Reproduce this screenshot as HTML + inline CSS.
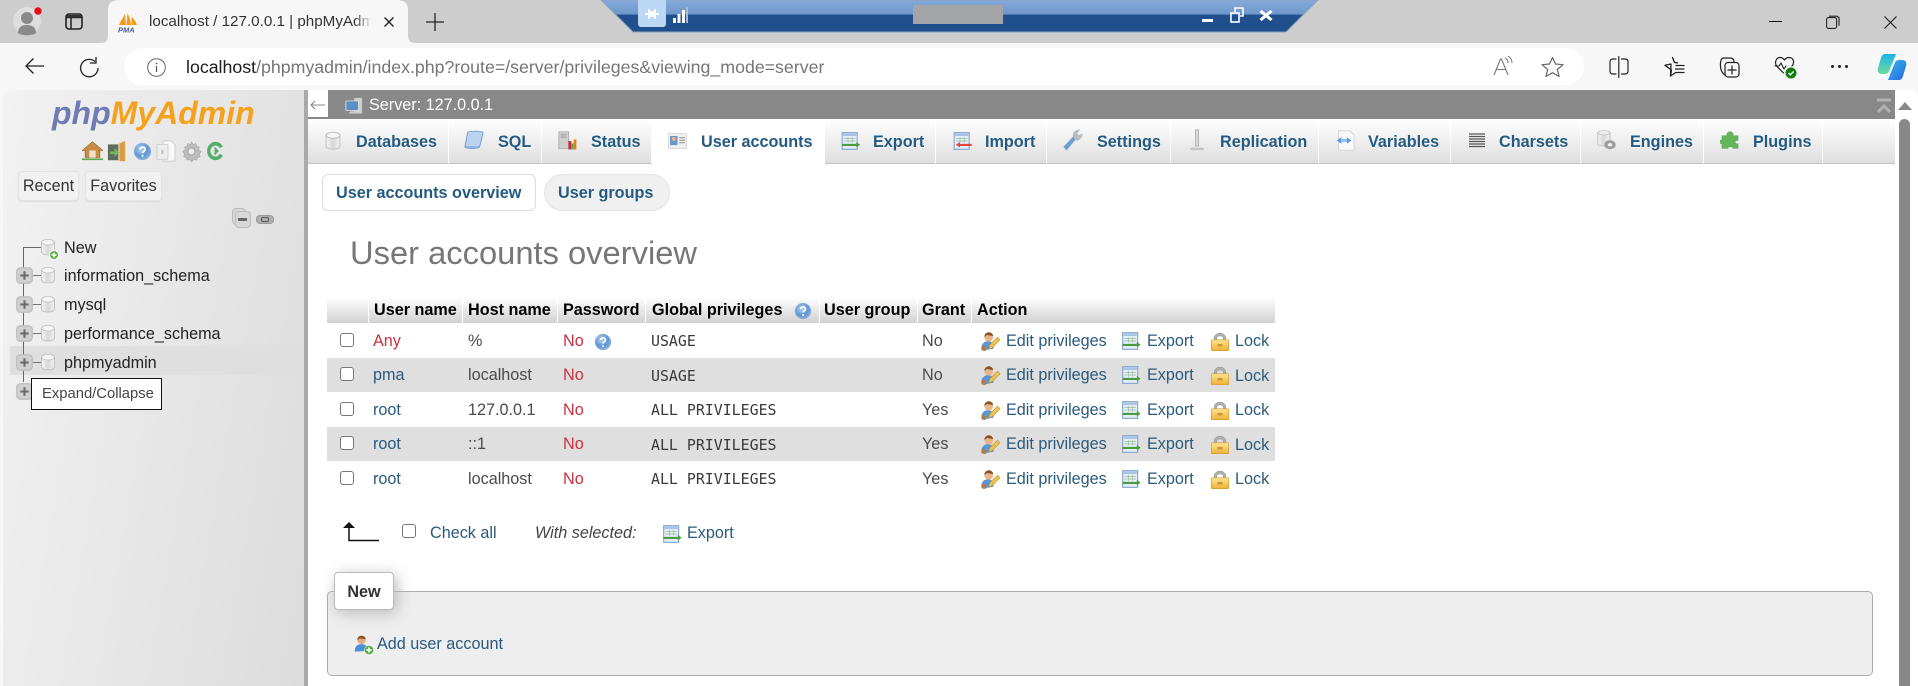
<!DOCTYPE html>
<html lang="en"><head><meta charset="utf-8"><title>localhost / 127.0.0.1 | phpMyAdmin</title>
<style>
html,body{margin:0;padding:0;width:1918px;height:686px;overflow:hidden;background:#f7f7f7;font-family:"Liberation Sans",Arial,sans-serif;color:#4a4a4a}
div,span,a,svg{position:absolute;display:block}
.t,.l,.b,.h,.m{white-space:nowrap;line-height:20px;font-size:16.2px;margin-top:1px}
.l{color:#2a5a7c}.h{font-weight:bold;color:#000}.b{font-weight:bold;color:#235a81;text-shadow:0 1px 0 #fff}
.m{font-family:"DejaVu Sans Mono","Liberation Mono",monospace;font-size:14.9px;color:#3a3a3a}
.r{color:#c8323f}
.row{left:0;width:1275px;height:35px}
.band{left:327px;width:948px;height:34px;background:#dfdfdf}
.cb{width:12px;height:12px;left:340px;border:1.5px solid #767676;border-radius:3px;background:#fff}
.tab{top:119px;height:44px;background:linear-gradient(#fff,#dfdfdf);border-right:1px solid #fff;border-bottom:1px solid #c4c4c4}
.hs{top:297px;width:1px;height:26px;background:#fff}
.st{fill:none;stroke:#222;stroke-width:1.5;stroke-linecap:round;stroke-linejoin:round}
</style></head><body>
<svg width="0" height="0" style="position:absolute">
<defs>
<linearGradient id="gdb" x1="0" x2="1" y1="0" y2="0"><stop offset="0" stop-color="#f4f4f4"/><stop offset=".5" stop-color="#d8d8d8"/><stop offset="1" stop-color="#f2f2f2"/></linearGradient>
<radialGradient id="ghp" cx=".4" cy=".35" r=".7"><stop offset="0" stop-color="#b9d4f0"/><stop offset=".6" stop-color="#5e96d3"/><stop offset="1" stop-color="#8db2da"/></radialGradient>
<linearGradient id="glk" x1="0" x2="0" y1="0" y2="1"><stop offset="0" stop-color="#ffe48c"/><stop offset="1" stop-color="#eeb23c"/></linearGradient>
<linearGradient id="gcp" x1="0" x2="1" y1="0" y2="1"><stop offset="0" stop-color="#2fb4e8"/><stop offset=".5" stop-color="#2f8fe8"/><stop offset="1" stop-color="#2a5fd8"/></linearGradient>
<linearGradient id="gcp2" x1="0" x2="0" y1="0" y2="1"><stop offset="0" stop-color="#19b4e8"/><stop offset="1" stop-color="#6fdc9a"/></linearGradient>
<symbol id="db" viewBox="0 0 20 22"><path d="M2 5v12c0 2.500 3 4 8 4s8-1.500 8-4V5z" fill="url(#gdb)" stroke="#bbb"/><ellipse cx="10" cy="5" rx="8" ry="3.500" fill="#f6f6f6" stroke="#bbb"/></symbol>
<symbol id="plus" viewBox="0 0 18 18"><rect x=".8" y=".8" width="16.4" height="16.4" rx="4" fill="#d0d0d0" stroke="#bdbdbd" stroke-width="1.4"/><path d="M9 4.500v9M4.500 9h9" stroke="#6a6a6a" stroke-width="2.200"/></symbol>
<symbol id="help" viewBox="0 0 22 22"><circle cx="11" cy="11" r="9.500" fill="url(#ghp)" stroke="#8fb0d4"/><path d="M8 8.500c.4-3.500 6.400-3.200 6 .4-.2 1.800-3 2-3 4" fill="none" stroke="#fff" stroke-width="2"/><circle cx="11" cy="16" r="1.200" fill="#fff"/></symbol>
<symbol id="edit" viewBox="0 0 24 24"><path d="M2 22c-1-6 2-10 7-10s7 3 6 8z" fill="#5b95d6" stroke="#4a7fb8" stroke-width=".5"/><circle cx="10" cy="7" r="5" fill="#eab48a"/><path d="M5 7c0-4 3-6 6-5.500s4 3 4 4c-3 0-6-1-7-1z" fill="#8a5222"/><path d="M10 21l1-5L20 7l3 3-9 9z" fill="#eec04f" stroke="#b68b2a" stroke-width=".6"/><path d="M1.500 18c1 2 1 4 3 5l3-1-3-6z" fill="#b77a3a"/></symbol>
<symbol id="export" viewBox="0 0 24 24"><rect x="2" y="2" width="18" height="20" fill="#e4eef8" stroke="#7fa3cc" stroke-width="1.300"/><rect x="3" y="3" width="16" height="3" fill="#a9c4e2"/><path d="M4 9h14M4 12h14M9 7v7M14 7v7" stroke="#9cc09a" stroke-width=".9"/><path d="M2 15.500h17V13l4.500 3.500-4.500 3.300V18H2z" fill="#4d9a3e"/></symbol>
<symbol id="import" viewBox="0 0 24 24"><rect x="2" y="2" width="18" height="20" fill="#e4eef8" stroke="#7fa3cc" stroke-width="1.300"/><rect x="3" y="3" width="16" height="3" fill="#a9c4e2"/><path d="M4 9h14M4 12h14M9 7v7M14 7v7" stroke="#9cc09a" stroke-width=".9"/><path d="M23 15.500H9V13l-5 3.500 5 3.300V18h14z" fill="#e0483e"/></symbol>
<symbol id="lock" viewBox="0 0 24 24"><path d="M5 12V8c0-8 14-8 14 0v4h-3V8c0-3.500-8-3.500-8 0v4z" fill="#b0b0b0" stroke="#8e8e8e" stroke-width=".6"/><rect x="1.500" y="10" width="21" height="13" rx="1" fill="url(#glk)" stroke="#cf9a34" stroke-width=".8"/><rect x="9" y="15" width="6" height="3" fill="#c9962f"/></symbol>
<symbol id="usr" viewBox="0 0 24 24"><rect x="1" y="3" width="22" height="18" fill="#efefef" stroke="#d6d6d6"/><rect x="3" y="6" width="9" height="11" fill="#6b95cc"/><circle cx="7.500" cy="9.500" r="2.500" fill="#e8b38a"/><path d="M14 8h7M14 11h7M14 14h7" stroke="#9a9a9a" stroke-width="1.400"/></symbol>
<symbol id="adduser" viewBox="0 0 24 24"><path d="M1 20c-.5-6 3-9 8-9s8 3 7.500 8z" fill="#4b8fd6"/><circle cx="9" cy="6" r="5" fill="#e4aa80"/><path d="M4 6c0-4 3-5.500 6-5s4 2.500 4 4c-3 0-6-1-7-1z" fill="#8a5222"/><circle cx="18" cy="18" r="5.500" fill="#59ad45" stroke="#fff" stroke-width=".6"/><path d="M18 15v6M15 18h6" stroke="#fff" stroke-width="2"/></symbol>
</defs></svg>

<!-- title bar -->
<div style="left:0;top:0;width:1918px;height:43px;background:#cdcdcd"></div>
<svg style="left:13px;top:7px" width="30" height="29" viewBox="0 0 30 29"><circle cx="14" cy="14" r="14" fill="#dedede"/><circle cx="14" cy="11" r="6" fill="#8a8a8a"/><path d="M5 26c0-6 4-8 9-8s9 2 9 8c-4 3-14 3-18 0z" fill="#8a8a8a"/><circle cx="25" cy="4" r="3.700" fill="#ea0a1a"/></svg>
<svg style="left:65px;top:13px" width="18" height="17" viewBox="0 0 18 17"><rect x="1" y="1" width="16" height="15" rx="3" fill="none" stroke="#222" stroke-width="1.600"/><path d="M1 4.500h16M6 4.500V16" fill="none" stroke="#222" stroke-width="1.500"/><path d="M2 2h14v2.500H2z" fill="#333"/></svg>
<svg style="left:0;top:0" width="1918" height="43"><path d="M100 43c6 0 8-2 8-8V10C108 3 112 0 120 0h276c8 0 12 3 12 10v25c0 6 2 8 8 8z" fill="#f7f7f7"/></svg>
<svg style="left:117px;top:12px" width="21" height="21" viewBox="0 0 21 21"><path d="M2 13C4 8 7 5 8 1l1 12zM9.500 13L10.500 1c2 4 3 8 4 12zM15 13c0-3-1-6 0-8 2 2 4 5 5 8z" fill="#f39a20"/><text x="1" y="20.500" font-family="Liberation Sans" font-size="7.500" font-weight="bold" font-style="italic" fill="#4a5d9c">PMA</text></svg>
<div class="t" style="left:149px;top:11px;width:222px;overflow:hidden;font-size:15.200px;color:#333">localhost / 127.0.0.1 | phpMyAdmin</div>
<div style="left:354px;top:8px;width:18px;height:28px;background:linear-gradient(to right,rgba(247,247,247,0),#f7f7f7)"></div>
<svg style="left:383px;top:16px" width="12" height="12"><path d="M1.500 1.500l9 9M10.500 1.500l-9 9" stroke="#222" stroke-width="1.400"/></svg>
<svg style="left:426px;top:13px" width="18" height="18"><path d="M9 0v18M0 9h18" stroke="#222" stroke-width="1.300"/></svg>

<!-- VPN bar -->
<svg style="left:600px;top:0" width="720" height="34"><defs><linearGradient id="vb" x1="0" x2="0" y1="0" y2="1"><stop offset="0" stop-color="#85abdb"/><stop offset=".44" stop-color="#6e97cb"/><stop offset=".47" stop-color="#204f8e"/><stop offset="1" stop-color="#204f8e"/></linearGradient></defs><path d="M1 0H718L686 32H33z" fill="url(#vb)" stroke="#8ea3bd"/></svg>
<div style="left:638px;top:0;width:28px;height:27px;border-radius:0 0 3px 3px;background:#bcd8f5"></div>
<svg style="left:644px;top:6px" width="16" height="16"><path d="M1 8h14M5 3v10M11 3v10M5 6h6M5 10h6" stroke="#fff" stroke-width="1.800"/></svg>
<svg style="left:673px;top:7px" width="16" height="16"><path d="M0 11h3v5H0zM4.500 7h3v9h-3zM9 3h3v13H9z" fill="#fff"/><path d="M13 0h2v16h-2z" fill="#a7bcd6"/></svg>
<div style="left:913px;top:5px;width:90px;height:19px;background:#a4a5a9"></div>
<div style="left:1202px;top:19px;width:11px;height:3px;background:#fff"></div>
<svg style="left:1230px;top:7px" width="14" height="16"><rect x="1" y="6" width="8" height="9" fill="none" stroke="#fff" stroke-width="1.600"/><path d="M5 5V1h8v8h-3" fill="none" stroke="#fff" stroke-width="1.600"/></svg>
<svg style="left:1259px;top:10px" width="14" height="11"><path d="M1.500 1l11 9M12.500 1l-11 9" stroke="#fff" stroke-width="3"/></svg>

<!-- window controls -->
<div style="left:1769px;top:21px;width:13px;height:1px;background:#111"></div>
<svg style="left:1826px;top:15px" width="14" height="14"><rect x=".6" y="2.600" width="10" height="10.800" rx="2" fill="none" stroke="#222" stroke-width="1.100"/><path d="M3 1.200h8l2 1.500v8" fill="none" stroke="#222" stroke-width="1.100"/></svg>
<svg style="left:1884px;top:16px" width="13" height="13"><path d="M.5.500l12 12M12.500.500l-12 12" stroke="#222" stroke-width="1.200"/></svg>

<!-- address bar -->
<svg style="left:24px;top:57px" width="21" height="18"><path d="M20 9H2M9.500 1.500L2 9l7.500 7.500" fill="none" stroke="#222" stroke-width="1.300"/></svg>
<svg style="left:79px;top:56px" width="21" height="22" viewBox="0 0 21 22"><path d="M16 5.500A8.700 8.700 0 1 0 19 12" fill="none" stroke="#222" stroke-width="1.300"/><path d="M17 1v6h-6" fill="none" stroke="#222" stroke-width="1.300"/></svg>
<div style="left:124px;top:48px;width:1460px;height:37px;border-radius:19px;background:#fff"></div>
<svg style="left:147px;top:58px" width="19" height="19"><circle cx="9.500" cy="9.500" r="8.800" fill="none" stroke="#666" stroke-width="1"/><path d="M9.500 8v6" stroke="#555" stroke-width="1.200"/><circle cx="9.500" cy="5.500" r=".9" fill="#555"/></svg>
<div class="t" style="left:186px;top:56px;font-size:17.750px;color:#757575"><span style="position:static;display:inline;color:#1b1b1b">localhost</span>/phpmyadmin/index.php?route=/server/privileges&amp;viewing_mode=server</div>
<svg style="left:1493px;top:56px" width="21" height="20" viewBox="0 0 21 20"><path d="M1 19L7.500 3h1L15 19M3.500 13.500h9" fill="none" stroke="#777" stroke-width="1.100"/><path d="M12 2c2 1 3 2.500 3 5M15 0c2.500 1.500 4 3.500 4 7" fill="none" stroke="#777" stroke-width="1"/></svg>
<svg style="left:1541px;top:56px" width="23" height="22" viewBox="0 0 23 22"><path d="M11.500 1.500l3 6.500 7.500.7-5.700 4.800 1.800 7-6.600-3.800-6.600 3.800 1.800-7L1 8.700 8.500 8z" fill="none" stroke="#666" stroke-width="1.200" stroke-linejoin="round"/></svg>
<svg style="left:1609px;top:56px" width="20" height="22" viewBox="0 0 20 22"><path d="M7 3H4Q1 3 1 6v9q0 3 3 3h3M12.500 3H16q3 0 3 3v9q0 3-3 3h-3.500M9.800 .5v21" class="st" style="stroke-width:1.200"/></svg>
<svg style="left:1664px;top:56px" width="21" height="22" viewBox="0 0 21 22"><path d="M8.500 1.500l2 5 3 .3M6.500 20l1-6L1 9.300 7 8zM6.500 20l4.500-3" class="st" style="stroke-width:1.300"/><path d="M12 9.500h8M11.500 13h8.500M11.500 16.500h8.500" class="st" style="stroke-width:1.200"/></svg>
<svg style="left:1719px;top:56px" width="21" height="22" viewBox="0 0 21 22"><path d="M6 19C3 17 1 13 1.500 7 2 3 3 2 5 2h6c3 0 4 2 4 4" class="st" style="stroke-width:1.200"/><rect x="6" y="6.500" width="14" height="14.500" rx="3" fill="#f7f7f7" stroke="#222" stroke-width="1.200"/><path d="M13 10v8M9 14h8" class="st" style="stroke-width:1.200"/></svg>
<svg style="left:1774px;top:56px" width="24" height="23" viewBox="0 0 24 23"><path d="M9.500 17L3 10.500C0 7 2 1.500 6 1.500c2.500 0 3.500 1 4.500 2.500 1-1.500 2.500-2.500 4.500-2.500 4.500 0 6 5 3 8.500" class="st" style="stroke-width:1.200"/><path d="M1 10h4l2-3 3 6 2-3" class="st" style="stroke-width:1.100"/><circle cx="17" cy="17" r="5.500" fill="#107c10"/><path d="M14.500 17l1.800 1.800 3.300-3.300" fill="none" stroke="#fff" stroke-width="1.400"/></svg>
<div style="left:1831px;top:65px;width:3px;height:3px;background:#222;border-radius:50%"></div>
<div style="left:1838px;top:65px;width:3px;height:3px;background:#222;border-radius:50%"></div>
<div style="left:1845px;top:65px;width:3px;height:3px;background:#222;border-radius:50%"></div>
<svg style="left:1877px;top:53px" width="30" height="28" viewBox="0 0 30 28"><path d="M8 1h11l-6 15c-1 3-2 5-5 5H5C1 21 0 18 1 15L4 5c1-3 2-4 4-4z" fill="url(#gcp2)"/><path d="M22 27H11l6-15c1-3 2-5 5-5h3c4 0 5 3 4 6l-3 10c-1 3-2 4-4 4z" fill="url(#gcp)"/></svg>

<!-- sidebar -->
<div style="left:3px;top:90px;width:301px;height:596px;border-radius:8px 0 0 0;background:linear-gradient(100deg,#f2f2f2 0%,#e6e6e6 55%,#dcdcdc 100%)"></div>
<div style="left:304px;top:90px;width:4px;height:596px;background:#a9a9a9"></div>
<div style="left:52px;top:93px;height:40px;line-height:40px;font-size:32px;font-weight:bold;font-style:italic;white-space:nowrap;color:#6f7bb3">php<span style="position:static;display:inline;color:#f6a11c">MyAdmin</span></div>
<svg style="left:82px;top:140px" width="21" height="21" viewBox="0 0 20 24" preserveAspectRatio="none"><path d="M10 2L0 12h3v8h14v-8h3z" fill="#c98c46" stroke="#8c5a2a" stroke-width=".6"/><rect x="7" y="12" width="6" height="8" fill="#f2e3c9"/><path d="M0 21h20v2H0z" fill="#64a850"/></svg>
<svg style="left:107px;top:140px" width="20" height="22" viewBox="0 0 21 25" preserveAspectRatio="none"><rect x="1" y="5" width="11" height="18" fill="#5d6d5c"/><path d="M3 13h5V9l5 5-5 5v-3H3z" fill="#73b85c"/><path d="M13 4l6-3v23h-6z" fill="#dd9b3d"/></svg>
<svg style="left:133px;top:142px" width="19" height="19"><use href="#help"/></svg>
<svg style="left:156px;top:140px" width="20" height="22" viewBox="0 0 20 25" preserveAspectRatio="none"><path d="M7 1h8l4 4v19H7z" fill="#f8f8f8" stroke="#ccc"/><rect x="1" y="5" width="11" height="17" rx="1" fill="#eee" stroke="#ccc"/><rect x="5" y="11" width="3" height="5" fill="#ccc"/></svg>
<svg style="left:181px;top:141px" width="21" height="21" viewBox="0 0 24 24"><path d="M12 1l2 3 3-1 1 3 3 1-1 3 3 2-2 3 1 3-3 1-1 3-3-1-3 3-2-3-3 1-1-3-3-1 1-3-2-3 3-2-1-3 3-1 1-3 3 1z" fill="#bdbdbd" stroke="#9e9e9e" stroke-width=".6"/><circle cx="12" cy="12" r="4" fill="#eee" stroke="#9e9e9e"/></svg>
<svg style="left:207px;top:141px" width="16" height="21" viewBox="0 0 19 23" preserveAspectRatio="none"><path d="M17 7A8 8 0 1 0 17 15" fill="none" stroke="#55ad6b" stroke-width="4"/><path d="M9 6l5 5-5 5z" fill="#55ad6b"/></svg>
<div class="t" style="margin-top:0;left:18px;top:171px;width:61px;height:30px;line-height:28px;text-align:center;background:#f1f1f1;border:1px solid #e3e3e3;border-radius:4px;box-sizing:border-box;color:#333;box-shadow:0 1px 1px #ddd">Recent</div>
<div class="t" style="margin-top:0;left:85px;top:171px;width:77px;height:30px;line-height:28px;text-align:center;background:#f1f1f1;border:1px solid #e3e3e3;border-radius:4px;box-sizing:border-box;color:#333;box-shadow:0 1px 1px #ddd">Favorites</div>
<div style="left:232px;top:208px;width:12px;height:15px;background:#d8d8d8;border:1px solid #bbb;border-radius:4px"></div>
<div style="left:235px;top:211px;width:14px;height:15px;background:#d8d8d8;border:1px solid #bbb;border-radius:4px"></div>
<div style="left:238px;top:218px;width:9px;height:3px;background:#666"></div>
<div style="left:256px;top:215px;width:16px;height:7px;background:#b0b0b0;border:1px solid #999;border-radius:4px"></div>
<div style="left:261px;top:217px;width:6px;height:3px;border:1px solid #555;border-radius:2px"></div>

<div style="left:10px;top:346px;width:294px;height:29px;background:#dfdfdf"></div>
<div style="left:23px;top:247px;width:1px;height:135px;background:#666"></div>
<div style="left:23px;top:247px;width:18px;height:1px;background:#666"></div>
<div style="left:32px;top:275px;width:9px;height:1px;background:#777"></div>
<div style="left:32px;top:304px;width:9px;height:1px;background:#777"></div>
<div style="left:32px;top:333px;width:9px;height:1px;background:#777"></div>
<div style="left:32px;top:362px;width:9px;height:1px;background:#777"></div>
<svg style="left:40px;top:238px" width="16" height="18"><use href="#db"/></svg>
<svg style="left:49px;top:250px" width="10" height="10"><circle cx="5" cy="5" r="4.500" fill="#5aac44" stroke="#fff"/><path d="M5 2.500v5M2.500 5h5" stroke="#fff" stroke-width="1.400"/></svg>
<div class="t" style="left:64px;top:237px;color:#222">New</div>
<svg style="left:16px;top:267px" width="17" height="17"><use href="#plus"/></svg>
<svg style="left:40px;top:266px" width="16" height="18"><use href="#db"/></svg>
<div class="t" style="left:64px;top:265px;color:#222">information_schema</div>
<svg style="left:16px;top:296px" width="17" height="17"><use href="#plus"/></svg>
<svg style="left:40px;top:295px" width="16" height="18"><use href="#db"/></svg>
<div class="t" style="left:64px;top:294px;color:#222">mysql</div>
<svg style="left:16px;top:325px" width="17" height="17"><use href="#plus"/></svg>
<svg style="left:40px;top:324px" width="16" height="18"><use href="#db"/></svg>
<div class="t" style="left:64px;top:323px;color:#222">performance_schema</div>
<svg style="left:16px;top:354px" width="17" height="17"><use href="#plus"/></svg>
<svg style="left:40px;top:353px" width="16" height="18"><use href="#db"/></svg>
<div class="t" style="left:64px;top:352px;color:#222">phpmyadmin</div>
<svg style="left:16px;top:383px" width="17" height="17"><use href="#plus"/></svg>
<div class="t" style="margin-top:0;left:31px;top:378px;width:131px;height:32px;box-sizing:border-box;background:#fff;border:1px solid #111;line-height:31px;padding-left:10px;font-size:14.800px;color:#444">Expand/Collapse</div>

<!-- main -->
<div style="left:308px;top:90px;width:1587px;height:596px;background:#fff"></div>
<div style="left:1895px;top:90px;width:23px;height:596px;background:#fff;border-radius:0 8px 0 0"></div>
<div style="left:308px;top:90px;width:1587px;height:29px;background:#888"></div>
<div style="left:308px;top:90px;width:20px;height:27px;background:#fff"></div>
<svg style="left:309px;top:99px" width="17" height="12"><path d="M16 6H2M6 2L2 6l4 4" fill="none" stroke="#888" stroke-width="1.100"/></svg>
<svg style="left:345px;top:97px" width="18" height="19" viewBox="0 0 20 24" preserveAspectRatio="none"><rect x="10" y="1" width="9" height="20" fill="#d0d0d0" stroke="#9a9a9a" stroke-width=".6"/><rect x="1" y="5" width="14" height="12" fill="#5a8fc4" stroke="#ddd"/><path d="M6 18h5v3H4z" fill="#ccc"/></svg>
<div class="t" style="left:369px;top:94px;color:#fff;font-size:16.200px">Server: 127.0.0.1</div>
<svg style="left:1876px;top:98px" width="16" height="16"><path d="M1 2h14" stroke="#b3b3b3" stroke-width="3"/><path d="M2 14l6-6 6 6" fill="none" stroke="#b3b3b3" stroke-width="3"/></svg>
<svg style="left:1897px;top:100px" width="16" height="11"><path d="M1 10L8 2l7 8z" fill="#888"/></svg>
<div style="left:1899px;top:119px;width:11px;height:567px;background:#888;border-radius:6px 6px 0 0"></div>

<!-- tabs -->
<div class="tab" style="left:308px;width:140px"></div>
<div class="tab" style="left:449px;width:92px"></div>
<div class="tab" style="left:542px;width:109px"></div>
<div style="left:652px;top:119px;width:172px;height:45px;background:#fff"></div>
<div class="tab" style="left:825px;width:110px"></div>
<div class="tab" style="left:936px;width:110px"></div>
<div class="tab" style="left:1047px;width:123px"></div>
<div class="tab" style="left:1171px;width:147px"></div>
<div class="tab" style="left:1319px;width:131px"></div>
<div class="tab" style="left:1451px;width:129px"></div>
<div class="tab" style="left:1581px;width:122px"></div>
<div class="tab" style="left:1704px;width:118px"></div>
<div class="tab" style="left:1823px;width:72px;border-right:0"></div>

<svg style="left:324px;top:131px" width="18" height="19"><use href="#db"/></svg>
<div class="b" style="left:356px;top:131px">Databases</div>
<svg style="left:463px;top:130px" width="22" height="20" viewBox="0 0 24 26" preserveAspectRatio="none"><path d="M5 3c2-2 15-2 17 0-1 6-3 14-4 19H2c1-5 2-13 3-19z" fill="#b9d2ee" stroke="#6f9bcb"/><path d="M2 22c2 3 14 3 16 0" fill="#8db4df" stroke="#6f9bcb"/></svg>
<div class="b" style="left:498px;top:131px">SQL</div>
<svg style="left:558px;top:131px" width="21" height="20" viewBox="0 0 24 26" preserveAspectRatio="none"><rect x="1" y="1" width="11" height="22" fill="#cfcfcf" stroke="#aaa"/><path d="M3 5h7M3 8h7" stroke="#888"/><rect x="12" y="13" width="3" height="11" fill="#d23"/><rect x="15" y="16" width="3" height="8" fill="#4a8"/><rect x="18" y="11" width="3" height="13" fill="#d80"/></svg>
<div class="b" style="left:591px;top:131px">Status</div>
<svg style="left:667px;top:131px" width="21" height="20"><use href="#usr"/></svg>
<div class="b" style="left:701px;top:131px">User accounts</div>
<svg style="left:840px;top:131px" width="21" height="20"><use href="#export"/></svg>
<div class="b" style="left:873px;top:131px">Export</div>
<svg style="left:952px;top:131px" width="21" height="20"><use href="#import"/></svg>
<div class="b" style="left:985px;top:131px">Import</div>
<svg style="left:1062px;top:129px" width="21" height="22" viewBox="0 0 24 26" preserveAspectRatio="none"><path d="M2 21L13 9c-1-4 2-8 7-8l-3 4 2 3 4-2c0 5-4 8-8 7L5 25z" fill="#6c9dd6" stroke="#8da7c4" stroke-width=".6"/><path d="M13 9c-1-4 2-8 7-8l-3 4 2 3 4-2c0 5-4 8-8 7z" fill="#bdbdbd"/></svg>
<div class="b" style="left:1097px;top:131px">Settings</div>
<svg style="left:1189px;top:129px" width="16" height="22" viewBox="0 0 20 26" preserveAspectRatio="none"><path d="M8 1h4v19H8z" fill="#d8d8d8" stroke="#999" stroke-width=".7"/><path d="M2 22h16l1 3H1z" fill="#c4c4c4"/></svg>
<div class="b" style="left:1220px;top:131px">Replication</div>
<svg style="left:1335px;top:130px" width="20" height="21" viewBox="0 0 22 26" preserveAspectRatio="none"><path d="M4 1h12l5 5v19H4z" fill="#f8f8f8" stroke="#d4d4d4"/><path d="M7 9l-5 4 5 4zM13 9l5 4-5 4z" fill="#5e97e6"/><rect x="7" y="11" width="6" height="4" fill="#9dc1f2"/></svg>
<div class="b" style="left:1368px;top:131px">Variables</div>
<svg style="left:1469px;top:132px" width="16" height="17"><path d="M0 2h16M0 4.500h16M0 7h16M0 9.500h16M0 12h16M0 14.500h16" stroke="#555" stroke-width="1.300"/></svg>
<div class="b" style="left:1499px;top:131px">Charsets</div>
<svg style="left:1596px;top:130px" width="21" height="21" viewBox="0 0 24 30" preserveAspectRatio="none"><path d="M2 4v16c0 3 6 3 9 3h5V4z" fill="url(#gdb)" stroke="#bbb"/><ellipse cx="9" cy="4" rx="7" ry="3" fill="#eee" stroke="#bbb"/><circle cx="16" cy="21" r="6.500" fill="#9d9d9d"/><circle cx="16" cy="21" r="2.500" fill="#eee"/></svg>
<div class="b" style="left:1630px;top:131px">Engines</div>
<svg style="left:1720px;top:131px" width="20" height="19" viewBox="0 0 20 24" preserveAspectRatio="none"><path d="M7 4c0-4 6-4 6 0v2h5v6c-4-1-4 5 0 4v6h-5c1-3-6-3-5 0H2v-6c-3 1-3-6 0-4V6h5z" fill="#65b65b" stroke="#4f9f46" stroke-width=".6"/></svg>
<div class="b" style="left:1753px;top:131px">Plugins</div>

<!-- subtabs -->
<div class="b" style="margin-top:0;left:322px;top:174px;width:214px;height:37px;box-sizing:border-box;background:#fff;border:1px solid #ddd;border-radius:6px;line-height:37px;padding-left:13px">User accounts overview</div>
<div class="b" style="margin-top:0;left:544px;top:174px;width:126px;height:37px;box-sizing:border-box;background:#f0f0f0;border:1px solid #e3e3e3;border-radius:19px;line-height:37px;padding-left:13px">User groups</div>

<div class="t" style="left:350px;top:232px;font-size:32.700px;line-height:40px;color:#777">User accounts overview</div>

<!-- table -->
<div style="left:327px;top:297px;width:948px;height:26px;background:linear-gradient(#fff,#d6d6d6 90%,#cfcfcf)"></div>
<div class="hs" style="left:368px"></div>
<div class="hs" style="left:462px"></div>
<div class="hs" style="left:557px"></div>
<div class="hs" style="left:645px"></div>
<div class="hs" style="left:819px"></div>
<div class="hs" style="left:917px"></div>
<div class="hs" style="left:971px"></div>
<div class="h" style="left:374px;top:299px">User name</div>
<div class="h" style="left:468px;top:299px">Host name</div>
<div class="h" style="left:563px;top:299px">Password</div>
<div class="h" style="left:652px;top:299px">Global privileges</div>
<svg style="left:794px;top:302px" width="18" height="18"><use href="#help"/></svg>
<div class="h" style="left:824px;top:299px">User group</div>
<div class="h" style="left:922px;top:299px">Grant</div>
<div class="h" style="left:977px;top:299px">Action</div>

<div class="band" style="top:358px"></div>
<div class="band" style="top:427px"></div>

<!-- row 1 -->
<div class="row" style="top:323px">
<div class="cb" style="top:10px"></div><div class="t r" style="left:373px;top:7px">Any</div><div class="t" style="left:468px;top:7px">%</div><div class="t r" style="left:563px;top:7px">No</div>
<svg style="left:594px;top:10px" width="18" height="18"><use href="#help"/></svg>
<div class="m" style="left:651px;top:7px">USAGE</div><div class="t" style="left:922px;top:7px">No</div>
<svg style="left:980px;top:8px;" width="21" height="21"><use href="#edit"/></svg><div class="l" style="left:1006px;top:7px">Edit privileges</div>
<svg style="left:1121px;top:8px" width="20" height="20"><use href="#export"/></svg><div class="l" style="left:1147px;top:7px">Export</div>
<svg style="left:1210px;top:8px" width="20" height="21"><use href="#lock"/></svg><div class="l" style="left:1235px;top:7px">Lock</div>
</div>
<!-- row 2 -->
<div class="row" style="top:358px;height:34px">
<div class="cb" style="top:9px"></div><div class="l" style="left:373px;top:6px">pma</div><div class="t" style="left:468px;top:6px">localhost</div><div class="t r" style="left:563px;top:6px">No</div>
<div class="m" style="left:651px;top:7px">USAGE</div><div class="t" style="left:922px;top:6px">No</div>
<svg style="left:980px;top:7px" width="21" height="21"><use href="#edit"/></svg><div class="l" style="left:1006px;top:6px">Edit privileges</div>
<svg style="left:1121px;top:7px" width="20" height="20"><use href="#export"/></svg><div class="l" style="left:1147px;top:6px">Export</div>
<svg style="left:1210px;top:7px" width="20" height="21"><use href="#lock"/></svg><div class="l" style="left:1235px;top:7px">Lock</div>
</div>
<!-- row 3 -->
<div class="row" style="top:392px">
<div class="cb" style="top:10px"></div><div class="l" style="left:373px;top:7px">root</div><div class="t" style="left:468px;top:7px">127.0.0.1</div><div class="t r" style="left:563px;top:7px">No</div>
<div class="m" style="left:651px;top:7px">ALL PRIVILEGES</div><div class="t" style="left:922px;top:7px">Yes</div>
<svg style="left:980px;top:8px" width="21" height="21"><use href="#edit"/></svg><div class="l" style="left:1006px;top:7px">Edit privileges</div>
<svg style="left:1121px;top:8px" width="20" height="20"><use href="#export"/></svg><div class="l" style="left:1147px;top:7px">Export</div>
<svg style="left:1210px;top:8px" width="20" height="21"><use href="#lock"/></svg><div class="l" style="left:1235px;top:7px">Lock</div>
</div>
<!-- row 4 -->
<div class="row" style="top:427px;height:34px">
<div class="cb" style="top:9px"></div><div class="l" style="left:373px;top:6px">root</div><div class="t" style="left:468px;top:6px">::1</div><div class="t r" style="left:563px;top:6px">No</div>
<div class="m" style="left:651px;top:7px">ALL PRIVILEGES</div><div class="t" style="left:922px;top:6px">Yes</div>
<svg style="left:980px;top:7px" width="21" height="21"><use href="#edit"/></svg><div class="l" style="left:1006px;top:6px">Edit privileges</div>
<svg style="left:1121px;top:7px" width="20" height="20"><use href="#export"/></svg><div class="l" style="left:1147px;top:6px">Export</div>
<svg style="left:1210px;top:7px" width="20" height="21"><use href="#lock"/></svg><div class="l" style="left:1235px;top:7px">Lock</div>
</div>
<!-- row 5 -->
<div class="row" style="top:461px">
<div class="cb" style="top:10px"></div><div class="l" style="left:373px;top:7px">root</div><div class="t" style="left:468px;top:7px">localhost</div><div class="t r" style="left:563px;top:7px">No</div>
<div class="m" style="left:651px;top:7px">ALL PRIVILEGES</div><div class="t" style="left:922px;top:7px">Yes</div>
<svg style="left:980px;top:8px" width="21" height="21"><use href="#edit"/></svg><div class="l" style="left:1006px;top:7px">Edit privileges</div>
<svg style="left:1121px;top:8px" width="20" height="20"><use href="#export"/></svg><div class="l" style="left:1147px;top:7px">Export</div>
<svg style="left:1210px;top:8px" width="20" height="21"><use href="#lock"/></svg><div class="l" style="left:1235px;top:7px">Lock</div>
</div>

<!-- check all -->
<svg style="left:342px;top:520px" width="38" height="22"><path d="M7 6v14.500h30" fill="none" stroke="#111" stroke-width="1.500"/><path d="M1 8l6-6 6 6z" fill="#111"/></svg>
<div class="cb" style="left:402px;top:524px"></div>
<div class="l" style="left:430px;top:522px">Check all</div>
<div class="t" style="left:535px;top:522px;font-style:italic;color:#444">With selected:</div>
<svg style="left:662px;top:524px" width="20" height="20"><use href="#export"/></svg>
<div class="l" style="left:687px;top:522px">Export</div>

<!-- fieldset -->
<div style="left:327px;top:591px;width:1546px;height:85px;box-sizing:border-box;background:#eee;border:1px solid #aaa;border-radius:5px"></div>
<div class="t" style="margin-top:0;left:334px;top:572px;width:60px;height:38px;box-sizing:border-box;background:#fff;border:1px solid #bbb;border-radius:4px;box-shadow:3px 3px 15px #bbb;line-height:38px;text-align:center;font-weight:bold;color:#333">New</div>
<svg style="left:354px;top:634px" width="20" height="22"><use href="#adduser"/></svg>
<div class="l" style="left:377px;top:633px">Add user account</div>
</body></html>
